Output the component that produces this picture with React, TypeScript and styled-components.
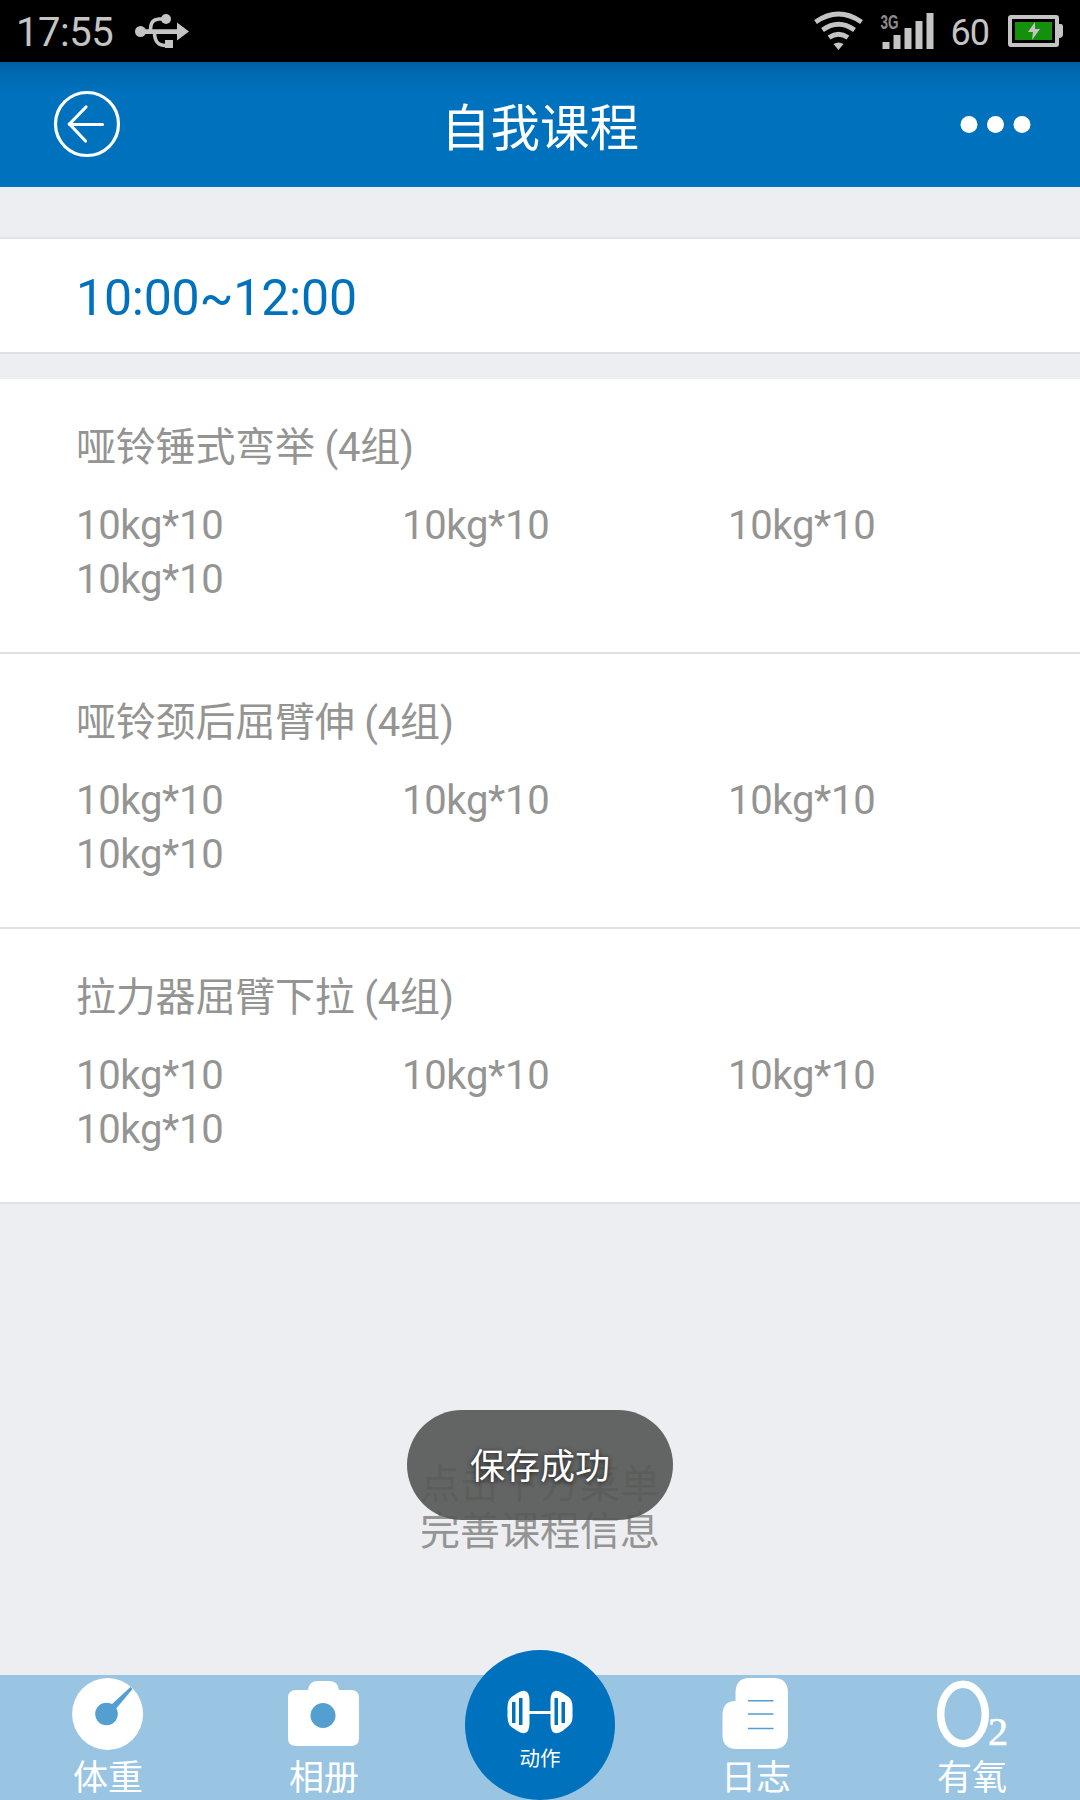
import React from 'react';
import styled, { createGlobalStyle } from 'styled-components';

const GlobalStyle = createGlobalStyle`
  * { box-sizing: border-box; }
  body { margin: 0; }
  svg { overflow: visible; flex: none; }
`;

const Screen = styled.div`
  width: 1080px;
  height: 1800px;
  display: flex;
  flex-direction: column;
  overflow: hidden;
  background: #edeef2;
  color: #949492;
  font-family: Roboto, 'Noto Sans CJK SC', sans-serif;
`;

const StatusBar = styled.div`
  height: 62px;
  flex: none;
  display: flex;
  align-items: center;
  justify-content: space-between;
  padding: 0 17px 0 16px;
  background: #000;
  color: #c4c4c4;
`;

const StatusGroup = styled.div<{ $gap: number }>`
  display: flex;
  align-items: center;
  gap: ${(p) => p.$gap}px;
`;

const Clock = styled.span`
  font-size: 40px;
  line-height: 62px;
  height: 62px;
  padding-top: 2px;
  letter-spacing: -0.5px;
`;

const Percent = styled.span`
  font-size: 36px;
  line-height: 62px;
  height: 62px;
  padding-top: 2px;
  letter-spacing: -1px;
  margin: 0 1px 0 -1px;
`;

const Header = styled.header`
  height: 125px;
  flex: none;
  display: flex;
  align-items: center;
  justify-content: space-between;
  padding: 0 49px 2px 53px;
  background: linear-gradient(#005fa0 0, #006bb2 12px, #0071bc 30px);
  color: #fff;
`;

const HeaderTitle = styled.h1`
  margin: 0;
  padding: 10px 4px 0 0;
  font-size: 49.5px;
  font-weight: 400;
  line-height: 70px;
`;

const IconButton = styled.button`
  width: 71px;
  padding: 0;
  border: 0;
  background: none;
  color: inherit;
  display: flex;
`;

const TimeRow = styled.section`
  height: 117px;
  flex: none;
  margin-top: 50px;
  padding: 5px 76px 0;
  display: flex;
  align-items: center;
  border: solid #dfe3e6;
  border-width: 2px 0;
  background: #fff;
  color: #0071bc;
  font-size: 50px;
  letter-spacing: -0.2px;
`;

const ExerciseList = styled.main`
  margin-top: 25px;
`;

const Exercise = styled.section`
  height: 275px;
  padding: 41px 26px 0 76px;
  border-bottom: 2px solid #dce1e5;
  background: #fff;
  font-size: 40px;
`;

const ExerciseName = styled.h2`
  margin: 0 0 23px;
  font-size: 40px;
  font-weight: 400;
  line-height: 56px;
  letter-spacing: -0.2px;
`;

const Sets = styled.div`
  display: grid;
  grid-template-columns: repeat(3, 326px);
  grid-auto-rows: 54px;
  line-height: 54px;
  letter-spacing: -0.3px;
`;

const Footer = styled.div`
  flex: 1;
  display: flex;
  justify-content: center;
  align-items: flex-end;
  padding-bottom: 120px;
  position: relative;
`;

const Hint = styled.p`
  margin: 0;
  font-size: 40px;
  line-height: 47px;
  text-align: center;
`;

const Toast = styled.div`
  position: absolute;
  top: 206px;
  left: 407px;
  width: 266px;
  height: 110px;
  padding-bottom: 4px;
  border-radius: 55px;
  display: flex;
  align-items: center;
  justify-content: center;
  background: rgba(87, 89, 88, 0.92);
  color: #fff;
  font-size: 35px;
  text-shadow: 0 1px 5px rgba(0, 0, 0, 0.75);
`;

const NavBar = styled.nav`
  height: 125px;
  flex: none;
  display: grid;
  grid-template-columns: repeat(5, 1fr);
  grid-template-rows: 125px;
  justify-items: center;
  align-items: end;
  background: #99c5e3;
  color: #fff;
  position: relative;
`;

const NavItem = styled.div`
  height: 125px;
  display: flex;
  flex-direction: column;
  align-items: center;
  gap: 3px;
  font-size: 35px;
  line-height: 50px;
`;

const MainAction = styled.div`
  width: 150px;
  height: 150px;
  padding-top: 40px;
  border-radius: 50%;
  display: flex;
  flex-direction: column;
  align-items: center;
  gap: 10px;
  background: #0071bc;
  font-size: 20.5px;
  line-height: 30px;
`;

const UsbIcon = () => (
  <svg width="54" height="36" viewBox="0 0 54 36" fill="#c4c4c4">
    <circle cx="5.5" cy="18.500" r="5.5" />
    <path d="M5 16.200h37V9.500l12 9-12 9v-6.500H5z" />
    <path d="M15.500 18C15.500 9 18 6.500 24 6h7M19.500 19c0 9 3 13.500 11 13.500" fill="none" stroke="#c4c4c4" strokeWidth="3.600" />
    <circle cx="31" cy="6" r="5" />
    <rect x="30" y="27" width="8" height="8" />
  </svg>
);

const WifiIcon = () => (
  <svg width="49" height="39" viewBox="-1 0.500 49 39" fill="none" stroke="#c4c4c4" strokeWidth="4.800">
    <path d="M1.500 10.500Q24.500-5.500 47.500 10.500M8.500 18.500q16-11.500 32 0M15 26q9.500-6.500 19 0" />
    <path d="M19.500 32.500q5-3 10 0l-5 6z" fill="#c4c4c4" stroke="none" />
  </svg>
);

const SignalText = styled.text`
  font: 700 21px 'Liberation Sans', sans-serif;
`;

const SignalIcon = () => (
  <svg width="54" height="38" viewBox="-0.500 0 54 38" fill="#c4c4c4">
    <SignalText x="0" y="17" fill="#8c8c8c" textLength="18" lengthAdjust="spacingAndGlyphs">3G</SignalText>
    <path d="M2 30h7v7H2zM13 23h7v14h-7zM24 16h7v21h-7zM35 9h7v28h-7zM46 1h7v36h-7z" />
  </svg>
);

const BatteryIcon = () => (
  <svg width="55" height="32" viewBox="0 0 55 32">
    <rect x="2" y="2" width="47" height="28" rx="1" fill="none" stroke="#c4c4c4" strokeWidth="4" />
    <path d="M51 9h2q2 0 2 3v7q0 4-4 4z" fill="#c4c4c4" />
    <path d="M7 7h37v18H7z" fill="#14900c" />
    <path d="M27 7l-7 10h5l-1 8 8-11h-5z" fill="#c4c4c4" />
  </svg>
);

const BackIcon = () => (
  <svg width="68" height="68" viewBox="0 0 68 68" fill="none" stroke="#fff" strokeWidth="3.200">
    <circle cx="34" cy="34" r="31.500" />
    <path d="M33 17L16.500 34l16 17M16.500 34.500h33" strokeLinecap="round" />
  </svg>
);

const MoreIcon = () => (
  <svg width="71" height="18" viewBox="0 0 71 18" fill="#fff">
    <circle cx="9" cy="9.500" r="8.500" />
    <circle cx="35.500" cy="9.500" r="8.500" />
    <circle cx="62" cy="9.500" r="8.500" />
  </svg>
);

const WeightIcon = () => (
  <svg width="72" height="76" viewBox="0 0 72 76">
    <ellipse cx="35.600" cy="39" rx="35.500" ry="36" fill="#fff" />
    <g fill="#539fd0">
      <circle cx="34.500" cy="39" r="11.300" />
      <path d="M39 30L58.500 12l2 2L43 35z" />
    </g>
  </svg>
);

const AlbumIcon = () => (
  <svg width="72" height="76" viewBox="0 0 72 76">
    <path d="M8 15h12q1-9 10-9h11q9 0 10 9h12q8 0 8 8v40q0 8-8 8H8q-8 0-8-8V23q0-8 8-8z" fill="#fff" />
    <circle cx="35" cy="40.500" r="12.500" fill="#539fd0" />
  </svg>
);

const DumbbellIcon = () => (
  <svg width="66" height="44" viewBox="-0.500 0 66 44">
    <g fill="#fff">
      <path d="M10 3q12-7 12 8v22q0 15-12 8l-6-4q-4-3-4-10V17q0-7 4-10z" />
      <path d="M55 3q-12-7-12 8v22q0 15 12 8l6-5q4-3 4-9V17q0-7-4-10z" />
      <path d="M20 21h25v3H20z" />
    </g>
    <path d="M4.500 12h3.500v21H4.500zM11.500 8h3.500v27h-3.500zM47 8h3.500v27H47zM54 12h3.500v21H54z" fill="#0071bc" />
  </svg>
);

const LogIcon = () => (
  <svg width="72" height="76" viewBox="0 0 72 76">
    <path d="M29.500 3h24q14.500 0 14.500 15v41q0 15-14.500 15H17Q2.500 74 2.500 60V40q0-14 13-14v-8Q15.500 3 29.500 3z" fill="#fff" />
    <path d="M28 25.700h25.500M28 39h25.500M28 53.500h25.500" stroke="#539fd0" strokeWidth="1.600" />
  </svg>
);

const OxygenDigit = styled.text`
  font: 40px 'Liberation Serif', serif;
`;

const OxygenIcon = () => (
  <svg width="72" height="76" viewBox="0 0 72 76">
    <ellipse cx="27" cy="39" rx="22.300" ry="29.800" fill="none" stroke="#fff" strokeWidth="7.500" />
    <OxygenDigit x="52" y="70" fill="#fff" stroke="#fff" strokeWidth="0.600">2</OxygenDigit>
  </svg>
);

const exercises = ['哑铃锤式弯举 (4组)', '哑铃颈后屈臂伸 (4组)', '拉力器屈臂下拉 (4组)'];
const sets = ['10kg*10', '10kg*10', '10kg*10', '10kg*10'];

export default function App() {
  return (
    <Screen>
      <GlobalStyle />
      <StatusBar>
        <StatusGroup $gap={22}>
          <Clock>17:55</Clock>
          <UsbIcon />
        </StatusGroup>
        <StatusGroup $gap={18}>
          <WifiIcon />
          <SignalIcon />
          <Percent>60</Percent>
          <BatteryIcon />
        </StatusGroup>
      </StatusBar>
      <Header>
        <IconButton aria-label="返回"><BackIcon /></IconButton>
        <HeaderTitle>自我课程</HeaderTitle>
        <IconButton aria-label="更多"><MoreIcon /></IconButton>
      </Header>
      <TimeRow>10:00~12:00</TimeRow>
      <ExerciseList>
        {exercises.map((name) => (
          <Exercise key={name}>
            <ExerciseName>{name}</ExerciseName>
            <Sets>
              {sets.map((set, i) => (
                <span key={i}>{set}</span>
              ))}
            </Sets>
          </Exercise>
        ))}
      </ExerciseList>
      <Footer>
        <Hint>点击下方菜单<br />完善课程信息</Hint>
        <Toast>保存成功</Toast>
      </Footer>
      <NavBar>
        <NavItem><WeightIcon />体重</NavItem>
        <NavItem><AlbumIcon />相册</NavItem>
        <MainAction><DumbbellIcon />动作</MainAction>
        <NavItem><LogIcon />日志</NavItem>
        <NavItem><OxygenIcon />有氧</NavItem>
      </NavBar>
    </Screen>
  );
}
